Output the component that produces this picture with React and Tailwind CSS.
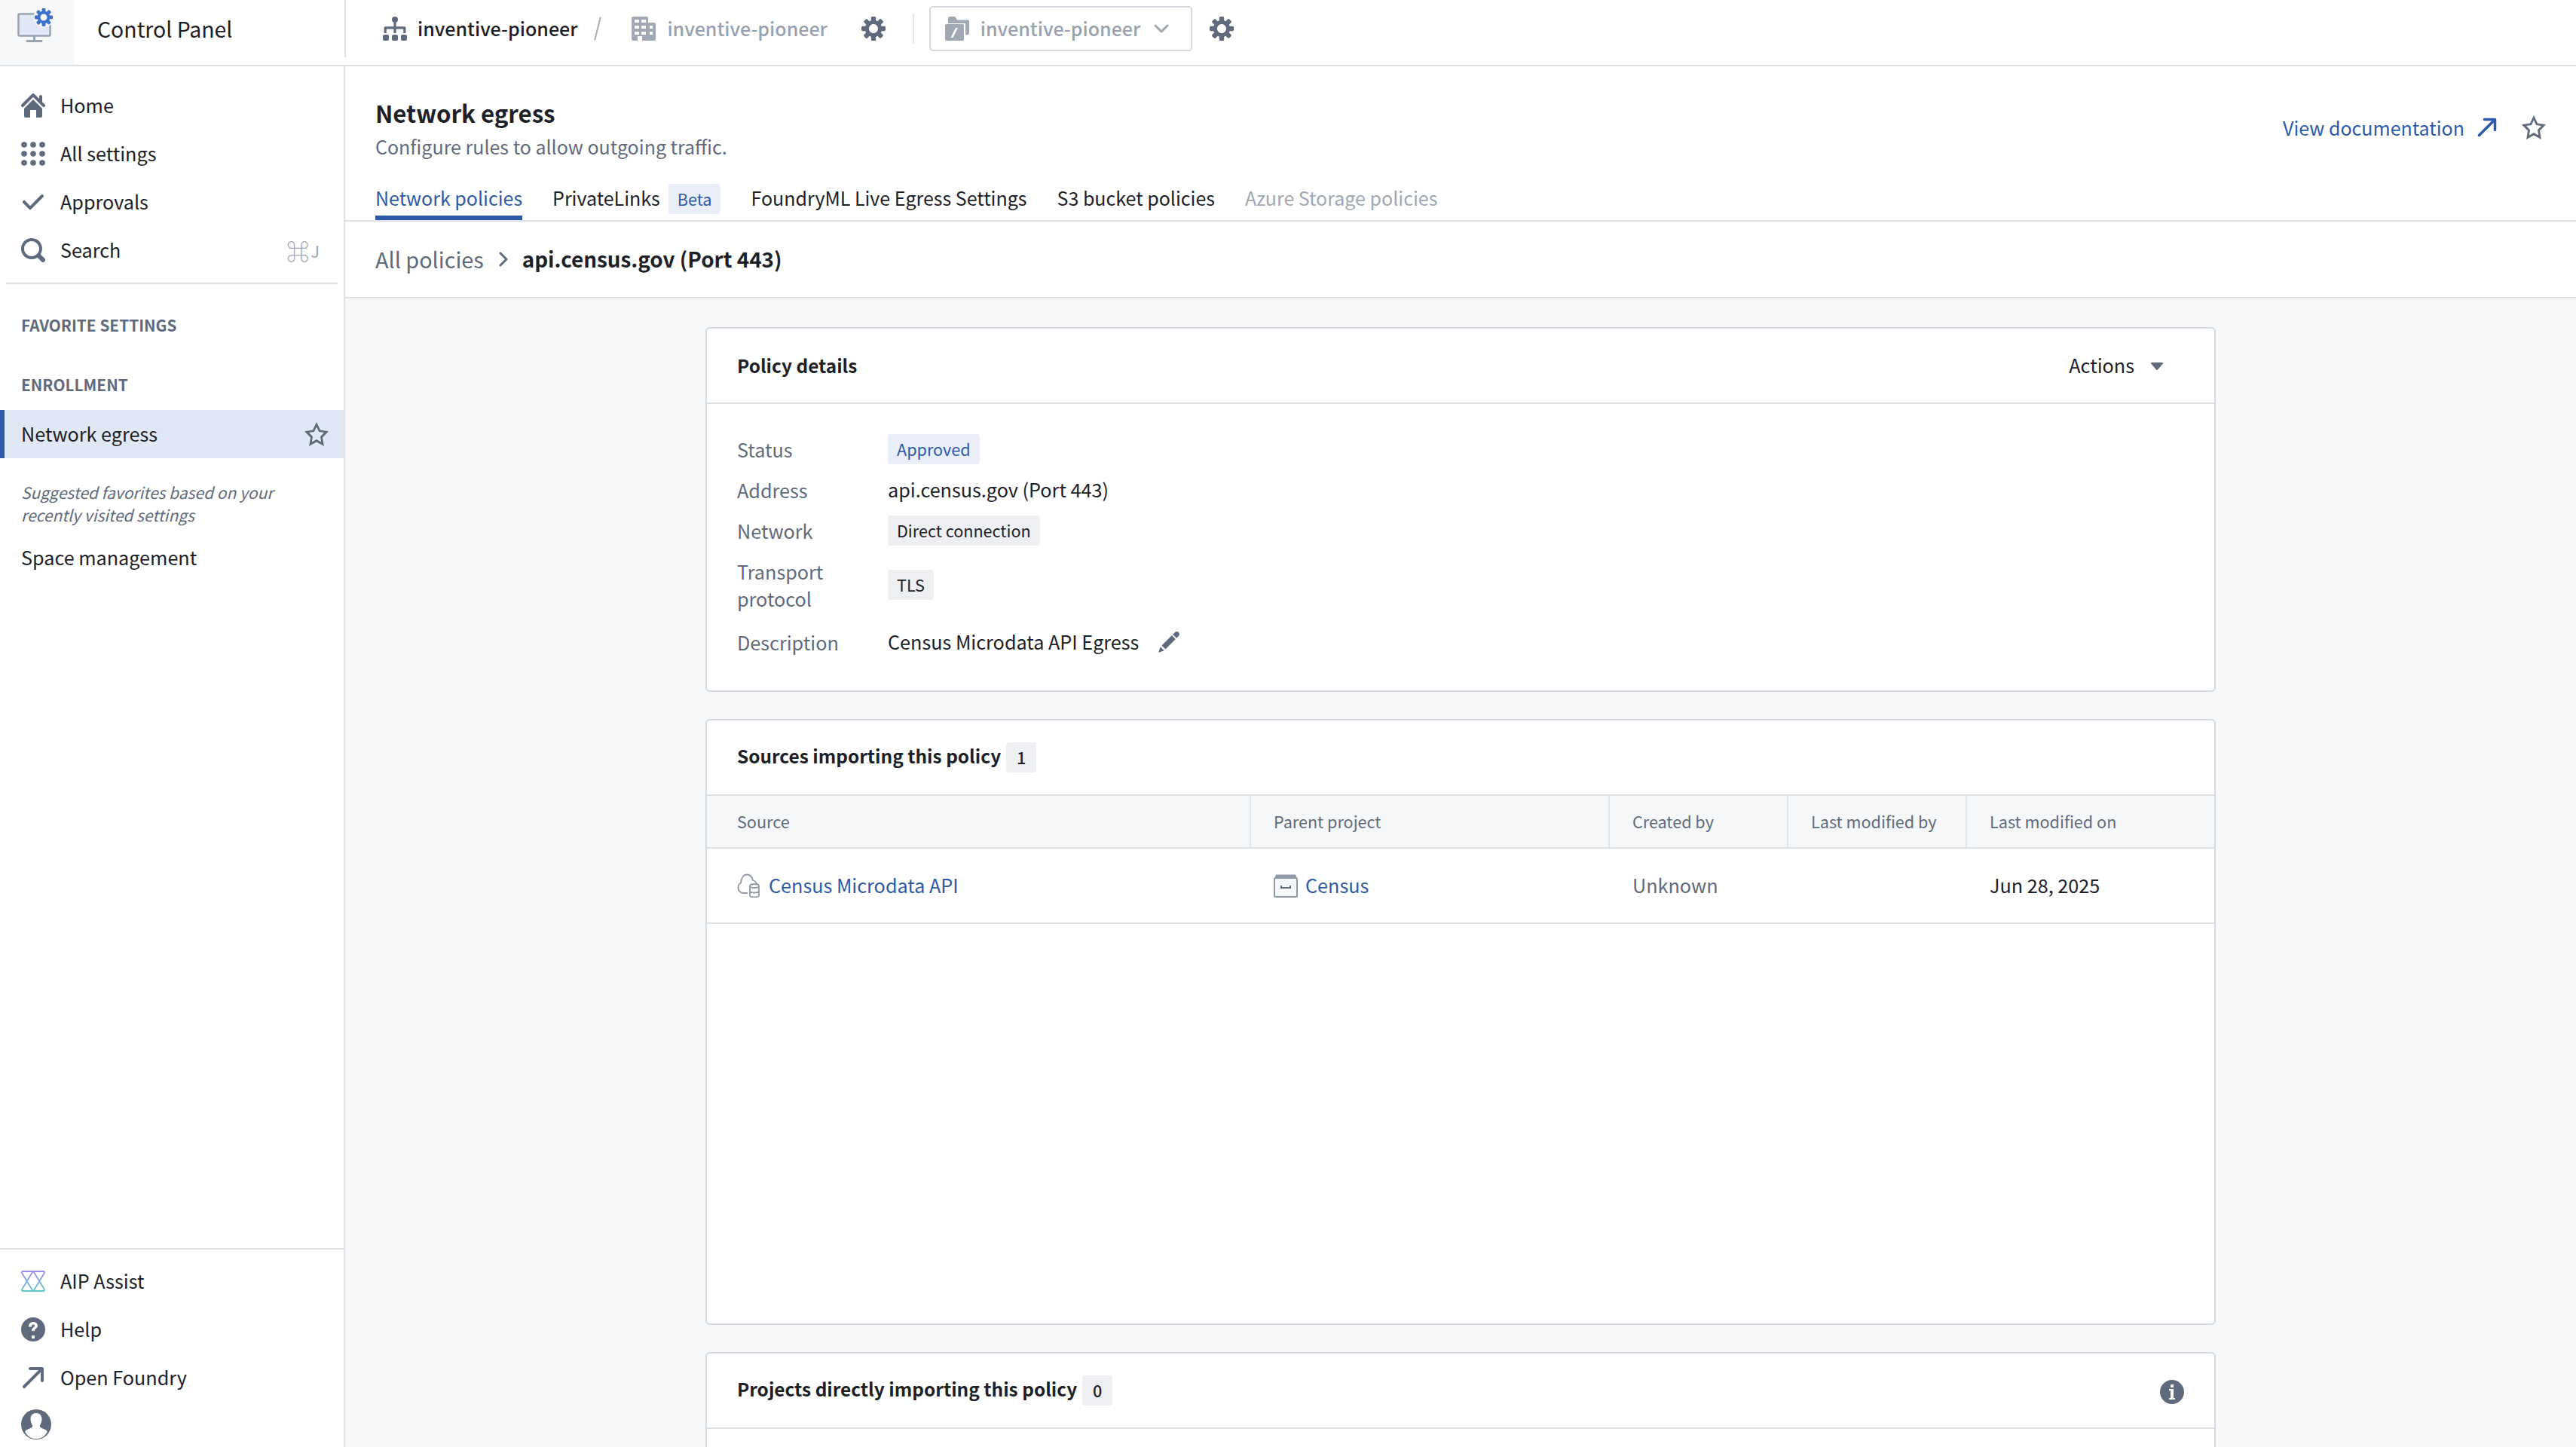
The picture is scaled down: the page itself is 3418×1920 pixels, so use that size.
const FONT = 'font-["Noto_Sans_CJK_SC",sans-serif]';

// 16px glyphs drawn on the same grid as the app's icon set
const PATHS = {
  cog: 'M15.19 6.39h-1.85c-.11-.37-.27-.71-.45-1.04l1.36-1.36c.31-.31.31-.82 0-1.13l-1.13-1.13a.803.803 0 00-1.13 0l-1.36 1.36c-.33-.17-.67-.33-1.04-.44V.79c0-.44-.36-.8-.8-.8h-1.6c-.44 0-.8.36-.8.8v1.86c-.39.12-.75.28-1.1.47l-1.3-1.3c-.3-.3-.79-.3-1.09 0L1.82 2.91c-.3.3-.3.79 0 1.09l1.3 1.3c-.2.34-.36.7-.48 1.09H.8c-.44 0-.8.36-.8.8v1.6c0 .44.36.8.8.8h1.85c.11.37.27.71.45 1.04l-1.36 1.36c-.31.31-.31.82 0 1.13l1.13 1.13c.31.31.82.31 1.13 0l1.36-1.36c.33.18.67.33 1.04.44v1.86c0 .44.36.8.8.8h1.6c.44 0 .8-.36.8-.8v-1.86c.39-.12.75-.28 1.1-.47l1.3 1.3c.3.3.79.3 1.09 0l1.09-1.09c.3-.3.3-.79 0-1.09l-1.3-1.3c.19-.35.36-.71.48-1.1h1.85c.44 0 .8-.36.8-.8v-1.6a.816.816 0 00-.81-.79zM8 11c-1.66 0-3-1.34-3-3s1.34-3 3-3 3 1.34 3 3-1.34 3-3 3z',
  home: 'M2 10v5c0 .55.45 1 1 1h3v-5h4v5h3c.55 0 1-.45 1-1v-5L8 4 2 10zm13.71-2.71L14 5.59V2c0-.55-.45-1-1-1s-1 .45-1 1v1.59L8.71.29C8.53.11 8.28 0 8 0s-.53.11-.71.29l-7 7a1.003 1.003 0 001.42 1.42L8 2.41l6.29 6.29c.18.19.43.3.71.3a1.003 1.003 0 00.71-1.71z',
  tick: 'M14 3c-.28 0-.53.11-.71.29L6 10.59l-3.29-3.3a1.003 1.003 0 00-1.42 1.42l4 4c.18.18.43.29.71.29s.53-.11.71-.29l8-8A1.003 1.003 0 0014 3z',
  search: 'M15.55 13.43l-2.67-2.68a6.94 6.94 0 001.11-3.76c0-3.87-3.13-7-7-7s-7 3.13-7 7 3.13 7 7 7c1.39 0 2.68-.42 3.76-1.11l2.68 2.67a1.498 1.498 0 102.12-2.12zm-8.56-1.44c-2.76 0-5-2.24-5-5s2.24-5 5-5 5 2.24 5 5-2.24 5-5 5z',
  star: 'M16 6.11l-5.53-.84L8 0 5.53 5.27 0 6.11l4 4.1L3.06 16 8 13.27 12.94 16 12 10.21l4-4.1zM4.91 13.2l.59-3.62L3 7.02l3.45-.53L8 3.2l1.55 3.29 3.45.53-2.5 2.56.59 3.62L8 11.49 4.91 13.2z',
  arrow: 'M14 1H6c-.55 0-1 .45-1 1s.45 1 1 1h5.59L1.29 13.29a1.003 1.003 0 001.42 1.42L13 4.41V10c0 .55.45 1 1 1s1-.45 1-1V2c0-.55-.45-1-1-1z',
  info: 'M8 0C3.58 0 0 3.58 0 8s3.58 8 8 8 8-3.58 8-8-3.58-8-8-8zM7 3h2v2H7V3zm3 10H6v-1h1V7H6V6h3v6h1v1z',
  help: 'M8 0a8 8 0 100 16A8 8 0 008 0zM7 12h2v2H7v-2zm1-9c1.66 0 3 1.12 3 2.5 0 1-.6 1.6-1.3 2.1-.6.4-.7.7-.7 1.4H7c0-1.2.4-1.8 1.2-2.4.5-.3.8-.6.8-1.1 0-.4-.4-.7-1-.7S7 5.6 7 6.2H5C5 4.4 6.3 3 8 3z',
  edit: 'M3.25 10.26l2.47 2.47 6.69-6.69-2.46-2.48-6.7 6.7zM.99 14.99l3.86-1.39-2.46-2.44-1.4 3.83zm12.25-14c-.48 0-.92.19-1.24.51l-1.44 1.44 2.47 2.47 1.44-1.44c.32-.32.51-.75.51-1.24.01-.95-.77-1.74-1.74-1.74z',
  caret: 'M12 6.5c0-.28-.22-.5-.5-.5h-7a.495.495 0 00-.37.83l3.5 4c.09.1.22.17.37.17s.28-.07.37-.17l3.5-4c.08-.09.13-.2.13-.33z',
  org: 'M6 2a2 2 0 114 0 2 2 0 01-4 0zM7.200 4h1.600v2.600h5.500c.5 0 .9.4.9.9V11h-1.600V8.200H8.800V11H7.200V8.200H2.400V11H.8V7.500c0-.5.4-.9.9-.9h5.500zM0 13c0-.6.4-1 1-1h2c.6 0 1 .4 1 1v2c0 .6-.4 1-1 1H1c-.6 0-1-.4-1-1zm6 0c0-.6.4-1 1-1h2c.6 0 1 .4 1 1v2c0 .6-.4 1-1 1H7c-.6 0-1-.4-1-1zm6 0c0-.6.4-1 1-1h2c.6 0 1 .4 1 1v2c0 .6-.4 1-1 1h-2c-.6 0-1-.4-1-1z',
  building: 'M1 0h9c.5 0 1 .5 1 1v3h4c.5 0 1 .5 1 1v10c0 .5-.5 1-1 1H7v-3H4v3H1c-.5 0-1-.5-1-1V1c0-.5.5-1 1-1zM2 2v2h3V2zM6.500 2v2h3V2zM2 6v2h3V6zM6.500 6v2h3V6zM12 6v2h2V6zM2 10v2h3v-2zM6.500 10v2h3v-2zM12 10v2h2v-2z',
  folder: 'M2 1c0-.5.4-1 1-1h3.500L8 2.200h7c.6 0 1 .4 1 1V11c0 .6-.4 1-1 1h-1.500V4.500H2zM0 6c0-.5.4-1 1-1h10.500c.5 0 1 .5 1 1v9c0 .6-.4 1-1 1H1c-.6 0-1-.4-1-1zM7 7.500 3.700 14h1.500l3.300-6.500z',
};

const Icon = ({ name, className }) => (
  <svg viewBox="0 0 16 16" fill="currentColor" fillRule="evenodd" className={className}>
    <path d={PATHS[name]} />
  </svg>
);

const ChevronDown = () => (
  <svg viewBox="0 0 20 12" fill="none" stroke="#a0a8b4" strokeWidth="3" strokeLinecap="round" strokeLinejoin="round" className="ml-[18px] h-3 w-5">
    <path d="M2 2l8 8 8-8" />
  </svg>
);

const ChevronRight = () => (
  <svg viewBox="0 0 12 20" fill="none" stroke="#5f6b7c" strokeWidth="3" strokeLinecap="round" strokeLinejoin="round" className="ml-[20px] h-5 w-3">
    <path d="M2 2l8 8-8 8" />
  </svg>
);

const GridDots = () => (
  <svg viewBox="0 0 16 16" fill="currentColor" className="h-8 w-8 text-[#5f6b7c]">
    {[2, 8, 14].flatMap(y => [2, 8, 14].map(x => <circle key={`${x}-${y}`} cx={x} cy={y} r="1.9" />))}
  </svg>
);

const AipIcon = () => (
  <svg viewBox="0 0 32 28" fill="none" strokeWidth="1.800" strokeLinejoin="round" className="h-7 w-8">
    <defs>
      <linearGradient id="aip" x1="0" y1="0" x2="0" y2="1">
        <stop offset="0" stopColor="#9d8cf0" />
        <stop offset="1" stopColor="#5fc9c9" />
      </linearGradient>
    </defs>
    <path stroke="url(#aip)" d="M2.500 1h27c1.300 0 1.900 1.300 1.300 2.300L17 26c-.5.9-1.500.9-2 0L1.200 3.300C.6 2.300 1.200 1 2.500 1zM2.500 27h27c1.300 0 1.900-1.300 1.300-2.300L17 2c-.5-.9-1.500-.9-2 0L1.200 24.700C.6 25.700 1.200 27 2.500 27z" />
  </svg>
);

const UserIcon = () => (
  <svg viewBox="0 0 40 40" className="h-10 w-10">
    <circle cx="20" cy="20" r="20" fill="#5f6b7c" />
    <path fill="#fff" d="M20 5c-4.500 0-7.500 3-7.500 7.500 0 3 .8 5.500 1.900 7.500.7 1.300.9 2.400.5 3.200-.6 1.200-3 1.900-5.400 3-2 .9-3.500 1.700-4.300 3.200C8 35.900 13.700 39 20 39s12-3.100 14.800-9.600c-.8-1.500-2.300-2.300-4.300-3.200-2.400-1.100-4.800-1.800-5.400-3-.4-.8-.2-1.900.5-3.200 1.100-2 1.900-4.500 1.900-7.500C27.500 8 24.500 5 20 5z" />
  </svg>
);

const Monitor = () => (
  <svg viewBox="0 0 48 46" className="h-[46px] w-12">
    <rect x="1.500" y="7.500" width="42" height="29" rx="1.500" fill="#e1e8f7" stroke="#9aa3b0" strokeWidth="2.500" />
    <path d="M22.500 37v5M13 43.500h19" stroke="#9aa3b0" strokeWidth="3" strokeLinecap="round" />
    <circle cx="35" cy="12" r="13.500" fill="#f6f7f9" />
    <svg x="23" y="0" width="24" height="24" viewBox="0 0 16 16" fill="#3d70cf" fillRule="evenodd"><path d={PATHS.cog} /></svg>
  </svg>
);

const CloudDb = () => (
  <svg viewBox="0 0 32 32" fill="none" stroke="#8f99a8" strokeWidth="1.800" className="h-8 w-8">
    <path d="M14 26H8c-4-.5-6.500-3.500-6.500-7.500 0-3 1.500-5 3.500-6C5.500 6 8.500 1.500 13 1.500c4.500 0 7 3.500 8 7.500 2 .5 4 2 5 5" />
    <path fill="#fff" d="M17 16.500c0-1.400 2.700-2.500 6-2.500s6 1.100 6 2.500v12.500c0 1.400-2.700 2.500-6 2.500s-6-1.100-6-2.500zM17 16.500c0 1.400 2.700 2.500 6 2.500s6-1.100 6-2.500M17 23c0 1.400 2.700 2.500 6 2.500s6-1.100 6-2.500" />
  </svg>
);

const ProjectBox = () => (
  <svg viewBox="0 0 32 32" fill="none" className="h-8 w-8">
    <path d="M3 1.500h26l2 5H1z" fill="#8f99a8" />
    <rect x="1" y="6" width="30" height="25" rx="1.500" fill="#f6f7f9" stroke="#8f99a8" strokeWidth="2" />
    <path d="M10 16v3h12v-3" stroke="#5f6b7c" strokeWidth="2" />
  </svg>
);

const Tag = ({ tone = 'gray', className = '', children }) => (
  <span className={`inline-flex h-10 min-w-10 items-center justify-center rounded-[4px] px-3 text-[21.6px] ${tone === 'blue' ? 'bg-[#e9eef8] text-[#2d5aa8]' : 'bg-[#edeff2] text-[#1c2127]'} ${className}`}>
    {children}
  </span>
);

const NavRow = ({ icon, label, right }) => (
  <div className="flex h-16 items-center pl-7 pr-8 text-[25.2px] text-[#1c2127]">
    <span className="flex w-[52px] shrink-0 items-center">{icon}</span>
    <span className="flex-1">{label}</span>
    {right}
  </div>
);

const Sidebar = () => (
  <aside className="flex w-[458px] shrink-0 flex-col border-r-2 border-[#dcdfe3] bg-white">
    <nav className="flex flex-col pt-5">
      <NavRow icon={<Icon name="home" className="h-8 w-8 text-[#5f6b7c]" />} label="Home" />
      <NavRow icon={<GridDots />} label="All settings" />
      <NavRow icon={<Icon name="tick" className="h-8 w-8 text-[#5f6b7c]" />} label="Approvals" />
      <NavRow
        icon={<Icon name="search" className="h-8 w-8 text-[#5f6b7c]" />}
        label="Search"
        right={
          <span className="flex items-center text-[#a0a8b4]">
            <span className="text-[30px] leading-8 font-bold">⌘</span>
            <span className="ml-0.5 text-[22px] leading-8">J</span>
          </span>
        }
      />
    </nav>
    <div className="mx-2 mt-[11px] h-0.5 bg-[#dcdfe3]" />

    <p className="mt-[42px] pl-7 text-[20.8px] leading-[24px] font-semibold text-[#5f6b7c]">FAVORITE SETTINGS</p>
    <p className="mt-[55px] pl-7 text-[20.8px] leading-[24px] font-semibold text-[#5f6b7c]">ENROLLMENT</p>

    <div className="mt-[22px] flex h-16 items-center border-l-[6px] border-[#2d5aa8] bg-[#e1e8f5] pl-[22px] pr-5 text-[25.2px] text-[#1c2127]">
      <span className="flex-1">Network egress</span>
      <Icon name="star" className="h-8 w-8 text-[#5f6b7c]" />
    </div>

    <p className="mt-[30px] pl-[28px] text-[21px] leading-[30px] text-[#5f6b7c] italic">
      Suggested favorites based on your
      <br />
      recently visited settings
    </p>
    <div className="mt-[10px] flex h-16 items-center pl-7 text-[25.2px] text-[#1c2127]">Space management</div>

    <div className="mt-auto border-t-2 border-[#dcdfe3] pt-[10px]">
      <NavRow icon={<AipIcon />} label="AIP Assist" />
      <NavRow icon={<Icon name="help" className="h-8 w-8 text-[#5f6b7c]" />} label="Help" />
      <NavRow icon={<Icon name="arrow" className="h-8 w-8 text-[#5f6b7c]" />} label="Open Foundry" />
      <div className="flex h-[60px] items-center pl-7"><UserIcon /></div>
    </div>
  </aside>
);

const TopBar = () => (
  <header className="flex h-[88px] shrink-0 border-b-2 border-[#dcdfe3] bg-white text-[25px]">
    <div className="flex w-[98px] items-center justify-center bg-[#f6f7f9] pr-1 pb-[18px]"><Monitor /></div>
    <div className="flex w-[359px] items-center pb-[10px] pl-[31px] text-[28.4px] text-[#1c2127]">Control Panel</div>
    <div className="mb-[10px] flex items-center whitespace-nowrap border-l-2 border-[#dcdfe3] pl-[49px]">
      <Icon name="org" className="h-8 w-8 shrink-0 text-[#5f6b7c]" />
      <span className="ml-[14px] font-medium text-[#1c2127]">inventive-pioneer</span>
      <span className="ml-[26px] h-8 w-0.5 rotate-[14deg] bg-[#a8afbb]" />
      <Icon name="building" className="ml-[44px] h-8 w-8 shrink-0 text-[#a0a8b4]" />
      <span className="ml-[15px] font-medium text-[#98a1ae]">inventive-pioneer</span>
      <Icon name="cog" className="ml-[45px] h-8 w-8 shrink-0 text-[#5f6b7c]" />
      <span className="ml-[36px] h-10 w-0.5 bg-[#e5e8eb]" />
      <div className="ml-[20px] flex h-[60px] w-[349px] shrink-0 items-center rounded-[5px] border-2 border-[#d3d8de] pl-[19px]">
        <Icon name="folder" className="h-8 w-8 shrink-0 text-[#a0a8b4]" />
        <span className="ml-[15px] font-medium text-[#98a1ae]">inventive-pioneer</span>
        <ChevronDown />
      </div>
      <Icon name="cog" className="ml-[23px] h-8 w-8 shrink-0 text-[#5f6b7c]" />
    </div>
  </header>
);

const TABS = ['FoundryML Live Egress Settings', 'S3 bucket policies'];

const PageHead = () => (
  <div className="shrink-0 bg-white">
    <div className="border-b-2 border-[#dcdfe3] pl-10 pr-10">
      <div className="flex items-start justify-between">
        <div className="pt-10">
          <h1 className="text-[31.2px] leading-[44px] font-semibold text-[#1c2127]">Network egress</h1>
          <p className="text-[25px] leading-[44px] text-[#5f6b7c]">Configure rules to allow outgoing traffic.</p>
        </div>
        <div className="flex items-center pt-[65px]">
          <span className="text-[25px] leading-8 text-[#2d5aa8]">View documentation</span>
          <Icon name="arrow" className="ml-4 h-7 w-7 text-[#2d5aa8]" />
          <Icon name="star" className="ml-8 h-8 w-8 text-[#5f6b7c]" />
        </div>
      </div>
      <div className="mt-[18px] flex h-[58px] items-start gap-10 text-[25px] text-[#1c2127]">
        <div className="flex h-[58px] items-start border-b-[6px] border-[#2d5aa8] pt-2 leading-[40px] text-[#2d5aa8]">Network policies</div>
        <div className="flex items-start pt-2 leading-[40px]">
          PrivateLinks
          <Tag tone="blue" className="mt-0.5 ml-[11px]">Beta</Tag>
        </div>
        {TABS.map(t => <div key={t} className="pt-2 leading-[40px]">{t}</div>)}
        <div className="pt-2 leading-[40px] text-[#a0a8b4]">Azure Storage policies</div>
      </div>
    </div>
    <div className="flex h-[102px] items-center border-b-2 border-[#dcdfe3] pl-10">
      <span className="text-[28.8px] text-[#5f6b7c]">All policies</span>
      <ChevronRight />
      <span className="ml-[19px] text-[27.8px] font-semibold text-[#1c2127]">api.census.gov (Port 443)</span>
    </div>
  </div>
);

const Card = ({ className = '', children }) => (
  <section className={`w-[2004px] shrink-0 rounded-[6px] border-2 border-[#d3d8de] bg-white ${className}`}>{children}</section>
);

const CardHead = ({ title, count, right }) => (
  <div className="flex h-[100px] items-center justify-between border-b-2 border-[#dcdfe3] pl-10 pr-6">
    <div className="flex items-center gap-[7px]">
      <span className={`text-[24.4px] font-semibold text-[#1c2127] ${count !== undefined ? 'pb-1' : ''}`}>{title}</span>
      {count !== undefined && <Tag className="font-medium">{count}</Tag>}
    </div>
    {right}
  </div>
);

const DETAIL_ROWS = [
  ['h-10', 'Status', <Tag tone="blue">Approved</Tag>],
  ['h-9', 'Address', 'api.census.gov (Port 443)'],
  ['h-10', 'Network', <Tag>Direct connection</Tag>],
  ['h-[72px]', <>Transport<br />protocol</>, <Tag>TLS</Tag>],
  ['h-12', 'Description', (
    <span className="flex items-center">
      Census Microdata API Egress
      <Icon name="edit" className="ml-[24px] h-8 w-8 text-[#5f6b7c]" />
    </span>
  )],
];

const PolicyDetails = () => (
  <Card>
    <CardHead
      title="Policy details"
      right={
        <div className="mr-9 flex items-center text-[25.2px] text-[#1c2127]">
          Actions
          <Icon name="caret" className="ml-[14px] h-8 w-8 text-[#5f6b7c]" />
        </div>
      }
    />
    <div className="flex flex-col gap-4 py-10 pl-10 text-[25.2px]">
      {DETAIL_ROWS.map(([h, label, value], i) => (
        <div key={i} className={`flex items-center ${h}`}>
          <div className="w-[200px] leading-9 text-[#5f6b7c]">{label}</div>
          <div className="text-[#1c2127]">{value}</div>
        </div>
      ))}
    </div>
  </Card>
);

const COLS = [
  ['w-[722px]', 'Source'],
  ['w-[476px]', 'Parent project'],
  ['w-[237px]', 'Created by'],
  ['w-[237px]', 'Last modified by'],
  ['flex-1', 'Last modified on'],
];

const SourcesCard = () => (
  <Card className="mt-9 h-[804px]">
    <CardHead title="Sources importing this policy" count="1" />
    <div className="flex h-[70px] border-b-2 border-[#dcdfe3] bg-[#f6f7f9] text-[21.6px] text-[#5f6b7c]">
      {COLS.map(([w, label], i) => (
        <div key={label} className={`flex items-center ${w} ${i < 4 ? 'border-r-2 border-[#e2e5e9]' : ''} ${i === 0 ? 'pl-10' : 'pl-[30px]'}`}>{label}</div>
      ))}
    </div>
    <div className="flex h-[100px] items-center border-b-2 border-[#dcdfe3] text-[25.2px]">
      <div className="flex w-[722px] items-center pl-10">
        <CloudDb />
        <span className="ml-2.5 text-[#2d5aa8]">Census Microdata API</span>
      </div>
      <div className="flex w-[476px] items-center pl-[30px]">
        <ProjectBox />
        <span className="ml-2.5 text-[#2d5aa8]">Census</span>
      </div>
      <div className="w-[237px] pl-[30px] text-[#5f6b7c]">Unknown</div>
      <div className="w-[237px]" />
      <div className="flex-1 pl-[30px] text-[#1c2127]">Jun 28, 2025</div>
    </div>
  </Card>
);

const ProjectsCard = () => (
  <Card className="mt-9 h-[300px] rounded-b-none">
    <CardHead
      title="Projects directly importing this policy"
      count="0"
      right={<Icon name="info" className="mt-1 mr-4 h-8 w-8 text-[#5f6b7c]" />}
    />
  </Card>
);

export default function App() {
  return (
    <div className={`flex h-[1920px] w-[3418px] flex-col overflow-hidden bg-white ${FONT}`}>
      <TopBar />
      <div className="flex min-h-0 flex-1">
        <Sidebar />
        <main className="flex min-w-0 flex-1 flex-col">
          <PageHead />
          <div className="flex min-h-0 flex-1 flex-col items-center overflow-hidden bg-[#f6f7f9] pt-[38px]">
            <PolicyDetails />
            <SourcesCard />
            <ProjectsCard />
          </div>
        </main>
      </div>
    </div>
  );
}
